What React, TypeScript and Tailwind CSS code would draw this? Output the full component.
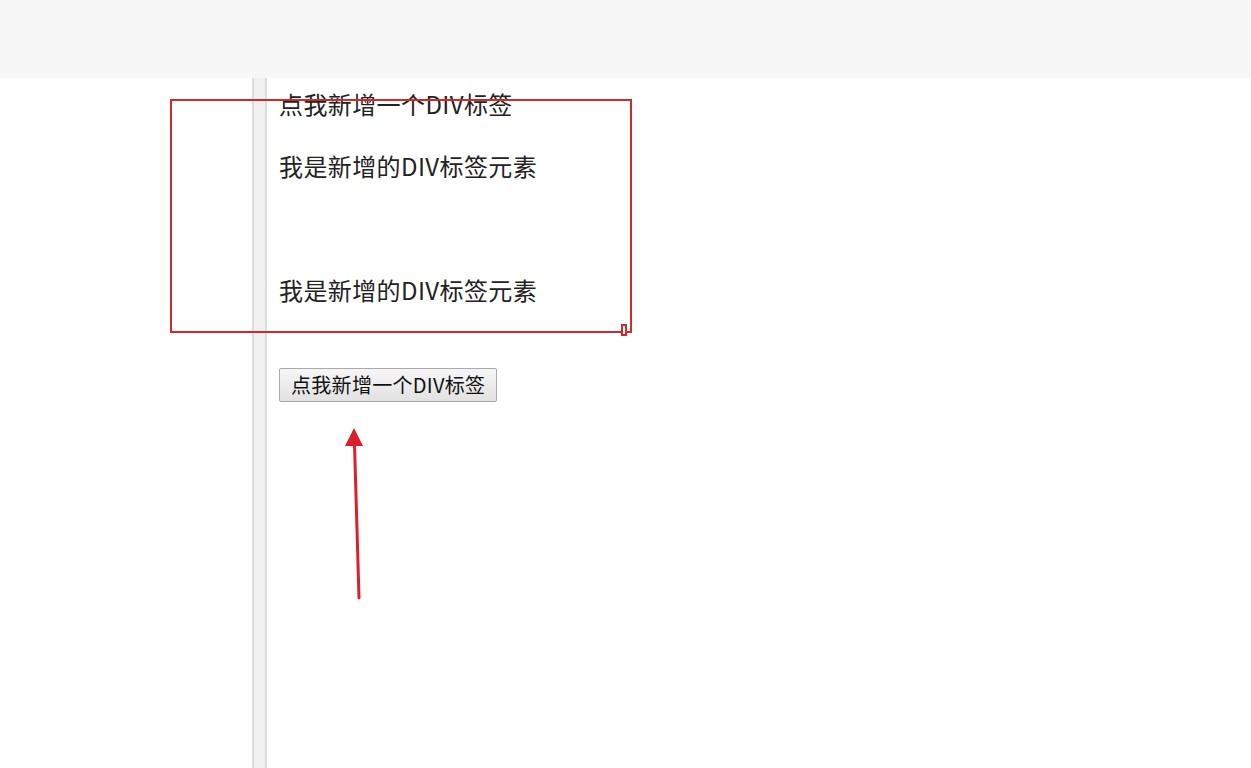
export default function App() {
  const font = { fontFamily: '"Noto Sans CJK SC", "Noto Sans", sans-serif' };

  return (
    <div className="relative h-[768px] w-[1251px] overflow-hidden bg-white text-[#222]" style={font}>
      {/* 顶部灰条 */}
      <div className="h-[78px] bg-[#f7f7f7]" />

      <div className="flex h-[690px]">
        <div className="w-[252px]" />
        <div className="w-[15px] border-x-2 border-[#dcdcdc] bg-[#f1f1f1]" />
        <div className="flex flex-col pl-[12px] pt-[10px]">
          <div className="h-[32px] text-[24px] leading-[32px] tracking-[0.4px]">点我新增一个DIV标签</div>
          <div className="mt-[30px] h-[32px] text-[24px] leading-[32px] tracking-[0.4px]">我是新增的DIV标签元素</div>
          <div className="mt-[30px] h-[32px]" />
          <div className="mt-[30px] h-[32px] text-[24px] leading-[32px] tracking-[0.4px]">我是新增的DIV标签元素</div>
          <div className="mt-[62px]">
            <button className="h-[34px] rounded-[2px] border border-[#a9a9a9] bg-gradient-to-b from-[#f6f6f6] to-[#e2e2e2] px-[11px] text-[20px] leading-[30px] tracking-[0.3px] text-[#111]">
              点我新增一个DIV标签
            </button>
          </div>
        </div>
      </div>

      {/* 标注框 */}
      <div className="absolute left-[170px] top-[99px] h-[234px] w-[462px] border-2 border-[#d02a2a]" />
      <div className="absolute left-[621px] top-[324px] h-[12px] w-[6px] border-2 border-[#d02a2a] bg-white" />

      {/* 标注箭头 */}
      <svg className="absolute left-[340px] top-[420px]" width="30" height="185" viewBox="0 0 30 185">
        <line x1="14.5" y1="24" x2="19" y2="178" stroke="#de1f2b" strokeWidth="3" strokeLinecap="round" />
        <polygon points="14,8 5,26 23,26" fill="#de1f2b" />
      </svg>
    </div>
  );
}
